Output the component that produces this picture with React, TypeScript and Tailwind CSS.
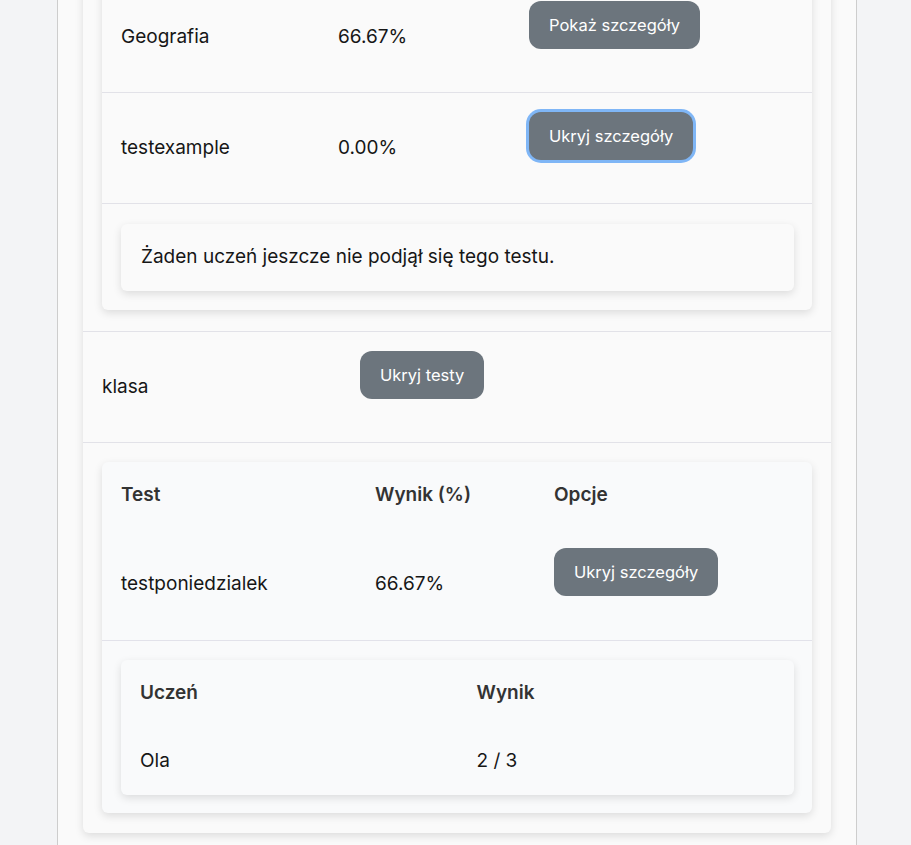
const font = { fontFamily: "Inter, 'Noto Sans', sans-serif" };

function Btn({ label, focused = false }: { label: string; focused?: boolean }) {
  return (
    <button
      type="button"
      className={`h-[48px] rounded-xl bg-[#6c757d] px-5 text-[16.5px] text-white ${
        focused ? "ring-[3px] ring-[#7fb6f6]" : ""
      }`}
    >
      {label}
    </button>
  );
}

export default function App() {
  return (
    <div className="h-[845px] overflow-hidden bg-[#f3f4f6] text-[19px] text-[#161616]" style={font}>
      <div className="ml-[57px] flow-root h-full w-[800px] border-x border-[#cdcdcd] bg-[#fafafa] px-[25px]">
        <div className="-mt-[38px] rounded-md bg-[#fafafa] shadow-[0_3px_8px_rgba(0,0,0,0.12)]">
          {/* expanded class row (tests of previous class) */}
          <div className="border-b border-[#e2e2e8] px-[19px] pt-[20px] pb-[21px]">
            <div className="rounded-md bg-[#fafafa] shadow-[0_3px_8px_rgba(0,0,0,0.12)]">
              <div className="flex h-[111px] border-b border-[#e2e2e8]">
                <div className="flex w-[217px] items-center pl-[19px]">Geografia</div>
                <div className="flex w-[191px] items-center pl-[19px]">66.67%</div>
                <div className="pl-[19px] pt-[19px]">
                  <Btn label="Pokaż szczegóły" />
                </div>
              </div>
              <div className="flex h-[111px] border-b border-[#e2e2e8]">
                <div className="flex w-[217px] items-center pl-[19px]">testexample</div>
                <div className="flex w-[191px] items-center pl-[19px]">0.00%</div>
                <div className="pl-[19px] pt-[19px]">
                  <Btn label="Ukryj szczegóły" focused />
                </div>
              </div>
              <div className="pt-[20px] pr-[18px] pb-[19px] pl-[19px]">
                <div className="flex h-[67px] items-center rounded-md bg-[#fafafa] px-5 shadow-[0_3px_8px_rgba(0,0,0,0.12)]">
                  Żaden uczeń jeszcze nie podjął się tego testu.
                </div>
              </div>
            </div>
          </div>

          {/* klasa row */}
          <div className="flex h-[111px] border-b border-[#e2e2e8]">
            <div className="flex w-[258px] items-center pl-[19px]">klasa</div>
            <div className="pl-[19px] pt-[19px]">
              <Btn label="Ukryj testy" />
            </div>
          </div>

          <div className="px-[19px] pt-[19px] pb-[20px]">
            <div className="rounded-md bg-[#f9fafb] shadow-[0_3px_8px_rgba(0,0,0,0.12)]">
              <div className="flex h-[66px] items-center font-semibold text-[#333]">
                <div className="w-[254px] pl-[19px]">Test</div>
                <div className="w-[179px] pl-[19px]">Wynik (%)</div>
                <div className="pl-[19px]">Opcje</div>
              </div>
              <div className="flex h-[113px] border-b border-[#e2e2ea]">
                <div className="flex w-[254px] items-center pl-[19px]">testponiedzialek</div>
                <div className="flex w-[179px] items-center pl-[19px]">66.67%</div>
                <div className="pl-[19px] pt-[20px]">
                  <Btn label="Ukryj szczegóły" />
                </div>
              </div>
              <div className="pt-[19px] pr-[18px] pb-[18px] pl-[19px]">
                <div className="rounded-md bg-[#f9fafb] shadow-[0_3px_8px_rgba(0,0,0,0.12)]">
                  <div className="grid h-[67px] grid-cols-2 items-center font-semibold text-[#333]">
                    <div className="pl-[19px]">Uczeń</div>
                    <div className="pl-[19px]">Wynik</div>
                  </div>
                  <div className="grid h-[68px] grid-cols-2 items-center">
                    <div className="pl-[19px]">Ola</div>
                    <div className="pl-[19px]">2 / 3</div>
                  </div>
                </div>
              </div>
            </div>
          </div>
        </div>
      </div>
    </div>
  );
}
